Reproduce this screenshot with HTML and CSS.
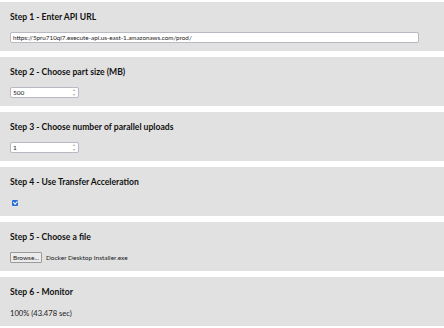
FILE: index.html
```html
<!DOCTYPE html>
<html lang="en">
<head>
  <meta charset="UTF-8" />
  <title>S3 Multipart Upload</title>
  <link rel="stylesheet" href="styles.css">
</head>
<body>

  <div class="step">
    <h3>Step 1 - Enter API URL</h3>
    <input type="text" class="url" value="https://5pru710qi7.execute-api.us-east-1.amazonaws.com/prod/">
  </div>

  <div class="step">
    <h3>Step 2 - Choose part size (MB)</h3>
    <div class="number"><span>500</span><span class="spin"><i>&#9652;</i><i>&#9662;</i></span></div>
  </div>

  <div class="step">
    <h3>Step 3 - Choose number of parallel uploads</h3>
    <div class="number"><span>1</span><span class="spin"><i>&#9652;</i><i>&#9662;</i></span></div>
  </div>

  <div class="step">
    <h3>Step 4 - Use Transfer Acceleration</h3>
    <div class="row"><span class="check"></span></div>
  </div>

  <div class="step">
    <h3>Step 5 - Choose a file</h3>
    <div class="row">
      <button class="browse">Browse...</button>
      <span class="filename">Docker Desktop Installer.exe</span>
    </div>
  </div>

  <div class="step">
    <h3>Step 6 - Monitor</h3>
    <div class="row monitor">100% (43.478 sec)</div>
  </div>

</body>
</html>
```

FILE: styles.css
```css
body {
  margin: 0;
  padding-top: 2px;
  font-family: Lato, "Open Sans", sans-serif;
  font-size: 7px;
  color: #222;
  background-color: #FFFFFF;
}
.step {
  background-color: #e1e1e1;
  height: 49px;
  margin-bottom: 6px;
  padding: 10px 10px 0;
  box-sizing: border-box;
}
h3 {
  margin: 0;
  font-size: 8.6px;
  line-height: 11px;
  font-weight: bold;
  color: #111;
}
input.url {
  display: block;
  margin-top: 9px;
  width: 409px;
  height: 11px;
  box-sizing: border-box;
  padding: 0 2px;
  font-family: inherit;
  font-size: 6.3px;
  color: #222;
  border: 1px solid #b9b9c2;
  border-radius: 2px;
  background: #fff;
  outline: none;
}
.number {
  margin-top: 9px;
  width: 69px;
  height: 11px;
  box-sizing: border-box;
  border: 1px solid #b9b9c2;
  border-radius: 2px;
  background: #fff;
  display: flex;
  align-items: center;
  justify-content: space-between;
  padding-left: 2px;
  font-size: 6.5px;
  line-height: 9px;
}
.spin {
  display: flex;
  flex-direction: column;
  width: 7px;
  height: 9px;
  margin-right: 1px;
  color: #aaa;
  font-size: 4px;
  line-height: 4.5px;
  text-align: center;
}
.spin i {
  font-style: normal;
}
.row {
  margin-top: 9px;
  height: 11px;
  display: flex;
  align-items: center;
  gap: 4px;
}
.monitor {
  font-size: 7.6px;
}
.check {
  width: 6px;
  height: 6px;
  margin-left: 2px;
  background-color: #2a6fd6;
  border-radius: 1px;
  position: relative;
}
.check:after {
  content: "";
  position: absolute;
  left: 2px;
  top: 0.5px;
  width: 1.5px;
  height: 3px;
  border: solid #fff;
  border-width: 0 1px 1px 0;
  transform: rotate(45deg);
}
button.browse {
  height: 11px;
  padding: 0 2px;
  font-family: inherit;
  font-size: 6.5px;
  line-height: 9px;
  color: #222;
  background: #ececec;
  border: 1px solid #9a9a9a;
  border-radius: 1px;
}
.filename {
  font-size: 6.5px;
}
```
